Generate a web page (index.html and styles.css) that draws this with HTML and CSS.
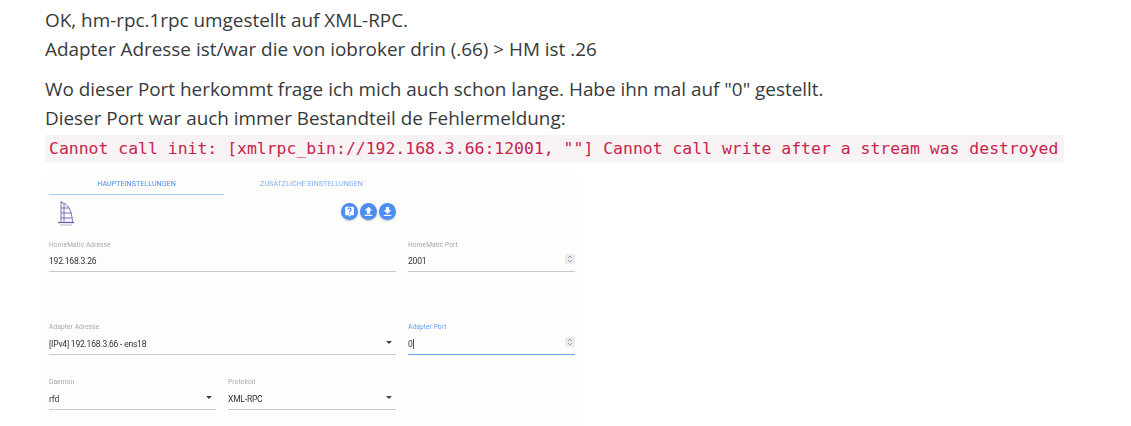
FILE: index.html
```html
<!DOCTYPE html>
<html lang="de">
<head>
<meta charset="utf-8">
<title>Post</title>
<link rel="stylesheet" href="styles.css">
</head>
<body>
<main class="post">
  <p class="para">OK, hm-rpc.1rpc umgestellt auf XML-RPC.<br>Adapter Adresse ist/war die von iobroker drin (.66) &gt; HM ist .26</p>
  <p class="para para-last">Wo dieser Port herkommt frage ich mich auch schon lange. Habe ihn mal auf "0" gestellt.<br>Dieser Port war auch immer Bestandteil de Fehlermeldung:</p>
  <code class="code">Cannot call init: [xmlrpc_bin://192.168.3.66:12001, ""] Cannot call write after a stream was destroyed</code>
  <section class="shot">
    <div class="tabs">
      <div class="tab tab-active">HAUPTEINSTELLUNGEN</div>
      <div class="tab">ZUSÄTZLICHE EINSTELLUNGEN</div>
    </div>
    <div class="toolbar">
      <svg class="logo" viewBox="0 0 18 26" width="18" height="26" aria-hidden="true">
        <g fill="none" stroke="#6a60b8" stroke-width=".9">
          <path d="M4 1V22M7 3V22"/>
          <path d="M4 2.500C11 3 15 11 15.500 22"/>
          <path d="M4 8H12M4 13H14.500M4 18H15"/>
          <path d="M1 22.500H17" stroke-width="1.300"/>
        </g>
        <path d="M3 25H15" stroke="#b9b6da" stroke-width="1"/>
      </svg>
      <div class="actions">
        <span class="fab"><svg viewBox="0 0 24 24" width="13" height="13"><path fill="#fff" d="M5 3h14a1 1 0 0 1 1 1v14a1 1 0 0 1-1 1h-5l-2 3-2-3H5a1 1 0 0 1-1-1V4a1 1 0 0 1 1-1z"/><path fill="none" stroke="#4a8df3" stroke-width="2.200" d="M9 8.500a3 3 0 1 1 4.600 2.500c-1 .7-1.600 1.200-1.600 2.500"/><circle cx="12" cy="16.400" r="1.300" fill="#4a8df3"/></svg></span>
        <span class="fab"><svg viewBox="0 0 24 24" width="13" height="13"><path fill="#fff" d="M9 16h6v-6h4l-7-7-7 7h4zM5 18h14v2.500H5z"/></svg></span>
        <span class="fab"><svg viewBox="0 0 24 24" width="13" height="13"><path fill="#fff" d="M19 9.500h-4v-6H9v6H5l7 7zM5 18h14v2.500H5z"/></svg></span>
      </div>
    </div>
    <div class="form">
      <div class="field span2 row1">
        <label class="label">HomeMatic Adresse</label>
        <div class="value">192.168.3.26</div>
      </div>
      <div class="field row1">
        <label class="label">HomeMatic Port</label>
        <div class="value">2001<span class="spin"><svg viewBox="0 0 10 10" width="10" height="10"><path fill="none" stroke="#8a8a8a" stroke-width=".8" d="M3 4l2-2 2 2M3 6l2 2 2-2"/></svg></span></div>
      </div>
      <div class="field span2 row2">
        <label class="label">Adapter Adresse</label>
        <div class="value">[IPv4] 192.168.3.66 - ens18<span class="caret"></span></div>
      </div>
      <div class="field row2 focus">
        <label class="label">Adapter Port</label>
        <div class="value">0<span class="cursor"></span><span class="spin"><svg viewBox="0 0 10 10" width="10" height="10"><path fill="none" stroke="#8a8a8a" stroke-width=".8" d="M3 4l2-2 2 2M3 6l2 2 2-2"/></svg></span></div>
      </div>
      <div class="field row3">
        <label class="label">Daemon</label>
        <div class="value">rfd<span class="caret"></span></div>
      </div>
      <div class="field row3">
        <label class="label">Protokoll</label>
        <div class="value">XML-RPC<span class="caret"></span></div>
      </div>
    </div>
  </section>
</main>
</body>
</html>
```
FILE: styles.css
```css
* { box-sizing: border-box; }
html, body { margin: 0; height: 426px; overflow: hidden; background: #fff; }
body { font-family: "Open Sans", "Noto Sans", sans-serif; color: #373a3c; }
.post { padding: 6px 0 0 45px; }
.para { margin: 0 0 11px; font-size: 18.9px; line-height: 29px; }
.para-last { margin-bottom: 2px; }
.code {
  display: block; width: 1019px; height: 27px; padding: 1px 4px 0;
  background: #f7f2f4; color: #c7254e;
  font-family: "DejaVu Sans Mono", monospace; font-size: 16.45px; line-height: 26px; white-space: nowrap;
}
.shot {
  width: 531px; height: 252px; margin: 12px 0 0 1px; padding: 0 3px;
  background: #fdfdfb; font-family: Roboto, sans-serif; color: #333; filter: blur(.35px);
}
.tabs { display: flex; height: 21px; }
.tab { width: 175px; padding-top: 5px; text-align: center; font-size: 7.2px; color: #7fb0f5; }
.tab-active { color: #4a8df3; border-bottom: 1px solid #a9cdf8; }
.toolbar { display: flex; justify-content: space-between; width: 347px; height: 41px; }
.logo { margin: 5px 0 0 8px; }
.actions { display: flex; gap: 2px; margin-top: 8px; height: 17px; }
.fab { display: flex; align-items: center; justify-content: center; width: 17px; height: 17px; border-radius: 50%; background: #4a8df3; box-shadow: 0 1px 2px rgba(0,0,0,.25); }
.form { display: grid; grid-template-columns: 167px 168px 167px; column-gap: 12px; }
.span2 { grid-column: span 2; }
.row2 { margin-top: 46px; }
.row3 { margin-top: 18px; }
.label { display: block; padding-top: 4px; height: 18px; font-size: 6.6px; line-height: 10px; color: #a8a8a8; letter-spacing: .1px; }
.value { position: relative; height: 19px; padding-top: 2px; font-size: 8.5px; line-height: 12px; letter-spacing: -.2px; border-bottom: 1px solid #c9c9c9; }
.row1 .value { height: 18px; padding-top: 1px; }
.caret { position: absolute; right: 4px; top: 5px; border: 3px solid transparent; border-top-color: #444; border-bottom: 0; }
.spin { position: absolute; right: 0; top: 0; display: flex; width: 10px; height: 10px; background: #ececf0; }
.row2 .spin { top: 1px; }
.cursor { display: inline-block; width: 1px; height: 10px; background: #555; vertical-align: -2px; }
.focus .label { color: #66a0f5; }
.focus .value { border-bottom-color: #66a0f5; }
```
